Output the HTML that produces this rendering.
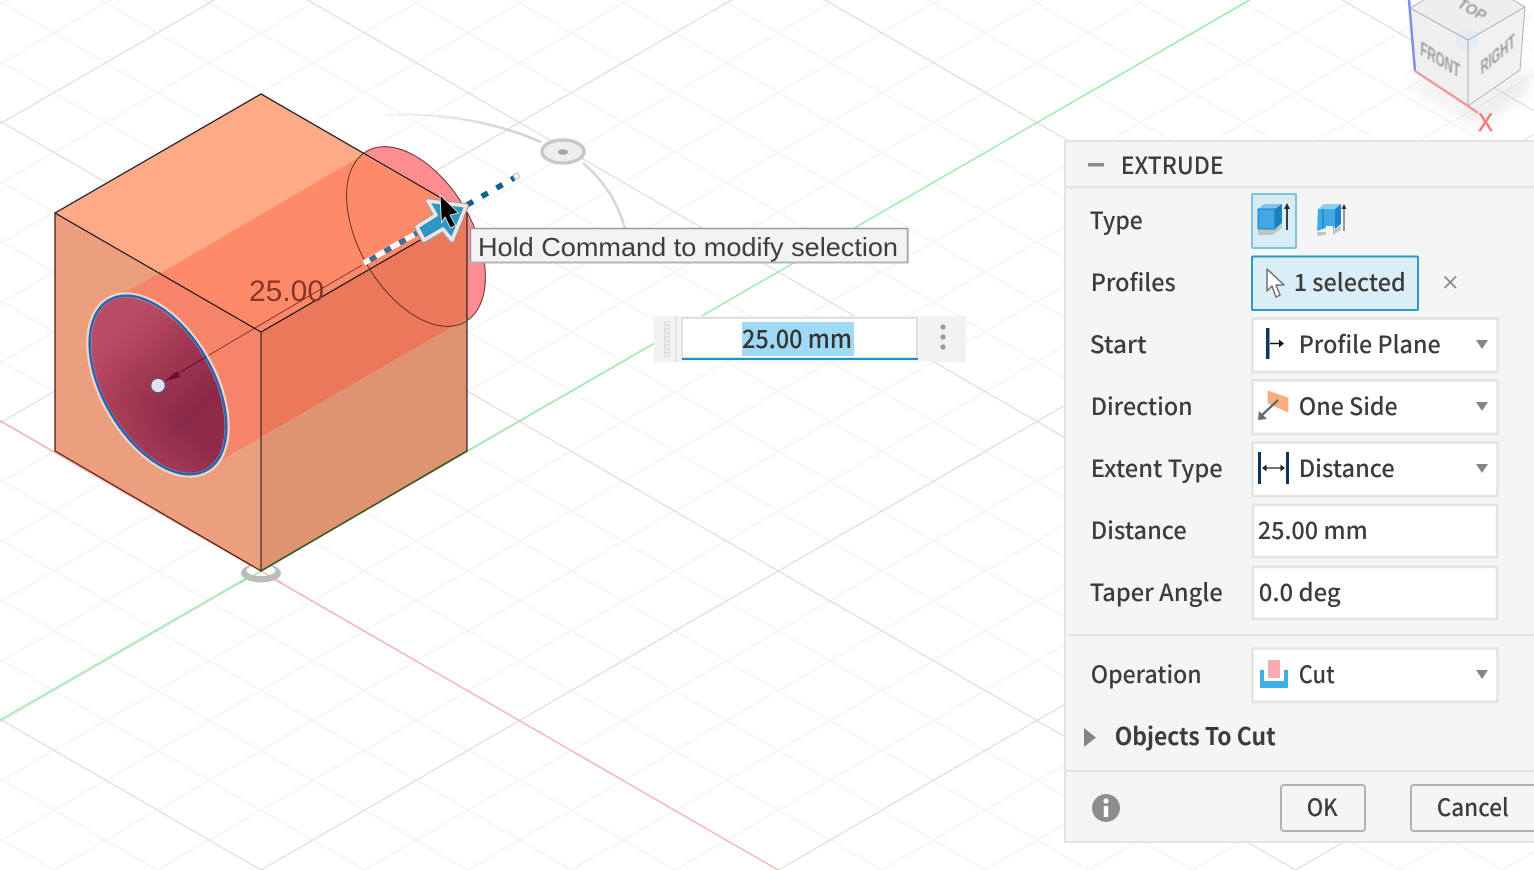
<!DOCTYPE html>
<html>
<head>
<meta charset="utf-8">
<style>
html,body{margin:0;padding:0;background:#fff;width:1534px;height:870px;overflow:hidden}
svg{display:block}
.p{font-family:"Noto Sans CJK JP","Liberation Sans",sans-serif;font-size:24px;font-weight:500;fill:#3c3c3c;transform:translateX(-0.3px)}
.c{font-family:"Liberation Sans",sans-serif;fill:#9d9d9d;font-weight:700}
.field{fill:#fff;stroke:#e4e4e4;stroke-width:2.5}
.tri{fill:#858585}
</style>
</head>
<body>
<svg width="1534" height="870" viewBox="0 0 1534 870" xmlns="http://www.w3.org/2000/svg">
<defs>
<pattern id="minor" patternUnits="userSpaceOnUse" x="261" y="571" width="103.46" height="59.8">
<path d="M0 0L103.46 59.8M0 59.8L103.46 0" stroke="#f0f0f0" stroke-width="1" fill="none"/>
</pattern>
<pattern id="major" patternUnits="userSpaceOnUse" x="261" y="571" width="517.3" height="299">
<path d="M0 0L517.3 299M0 299L517.3 0" stroke="#dadada" stroke-width="1" fill="none"/>
</pattern>
<linearGradient id="hole" gradientUnits="userSpaceOnUse" x1="92" y1="405" x2="222" y2="375">
<stop offset="0" stop-color="#bb4c67"/>
<stop offset="0.45" stop-color="#a03651"/>
<stop offset="0.85" stop-color="#8b2a48"/>
<stop offset="1" stop-color="#8d2b49"/>
</linearGradient>
<linearGradient id="hole2" gradientUnits="userSpaceOnUse" x1="170" y1="400" x2="200" y2="470">
<stop offset="0" stop-color="#bc4d66" stop-opacity="0"/>
<stop offset="1" stop-color="#bc4d66" stop-opacity=".8"/>
</linearGradient>
<linearGradient id="arcfade" gradientUnits="userSpaceOnUse" x1="385" y1="115" x2="520" y2="130">
<stop offset="0" stop-color="#e2e2e2" stop-opacity=".4"/>
<stop offset="1" stop-color="#d0d0d0"/>
</linearGradient>
<clipPath id="cube"><path d="M261 94L467 213V451L261 571L55 451V213Z"/></clipPath>
<filter id="soft" x="-30%" y="-30%" width="160%" height="160%"><feGaussianBlur stdDeviation="8"/></filter>
<filter id="b05"><feGaussianBlur stdDeviation="0.45"/></filter>
</defs>

<rect width="1534" height="870" fill="#fff"/>
<rect width="1534" height="870" fill="url(#minor)"/>
<rect width="1534" height="870" fill="url(#major)"/>
<path d="M0 421L778 870" stroke="#f7a8a8" stroke-width="1.1"/>
<path d="M0 720L1250 0" stroke="#84ee98" stroke-width="1.1"/>

<!-- origin ring -->
<ellipse cx="261" cy="573" rx="20" ry="9.500" fill="#bcbcbc"/>
<ellipse cx="261" cy="570.500" rx="14.500" ry="5.500" fill="#fff"/>
<path d="M0 720L261 571M261 571L778 870" stroke="none"/>
<path d="M240 583L261 571" stroke="#84ee98" stroke-width="1.100"/>
<path d="M261 571L282 583" stroke="#f7a8a8" stroke-width="1.100"/>

<!-- rotation arc -->
<path d="M385 115C440 112 495 122 541 142" fill="none" stroke="url(#arcfade)" stroke-width="2.500"/>
<path d="M583 163C603 180 618 202 625 229" fill="none" stroke="#d6d6d6" stroke-width="2.500"/>
<ellipse cx="563" cy="151.500" rx="21" ry="11.500" fill="#eeeeee" stroke="#c8c8c8" stroke-width="3.500"/>
<ellipse cx="563" cy="152" rx="5" ry="2.800" fill="#a6a6a6"/>

<!-- far disk -->
<ellipse cx="416" cy="236.500" rx="98.500" ry="56.500" transform="rotate(60 416 236.500)" fill="#fe8d92"/>

<!-- cube faces -->
<path d="M261 94L467 213L261 332L55 213Z" fill="#ffaa86"/>
<path d="M55 213L261 332V571L55 451Z" fill="#eb9f7f"/>
<path d="M261 332L467 213V451L261 571Z" fill="#de9371"/>

<!-- cylinder bands -->
<g clip-path="url(#cube)">
<path d="M363 155L467 213L261 332L160 273.500Z" fill="#ff8a6a"/>
<path d="M160 273L261 332V437L223 459L110 420V300Z" fill="#f58468"/>
<path d="M261 332L467 213V318L261 437Z" fill="#ec785c"/>
</g>

<!-- edges -->
<g fill="none" stroke-width="1.200" stroke-linecap="round">
<path d="M55 213L261 94L467 213L261 332Z" stroke="#151515"/>
<path d="M55 213V451" stroke="#2a1510"/>
<path d="M467 213V451" stroke="#222"/>
<path d="M261 332V571" stroke="#3a2a25"/>
<path d="M55 451L261 571" stroke="#5b1a12"/>
<path d="M261 571L467 451" stroke="#33591f" stroke-width="1.600"/>
</g>
<ellipse cx="416" cy="236.500" rx="98.500" ry="56.500" transform="rotate(60 416 236.500)" fill="none" stroke="#5a2a22" stroke-width=".9"/>

<!-- thin dimension line -->
<path d="M170 378L362 265" stroke="#5a1a20" stroke-width="0.9" opacity=".8"/>
<text x="249" y="301" font-family="'Liberation Sans',sans-serif" font-size="30" fill="#87352a" textLength="75" lengthAdjust="spacing">25.00</text>

<!-- hole -->
<ellipse cx="158" cy="385" rx="99" ry="56" transform="rotate(60 158 385)" fill="url(#hole)" stroke="#f3d6c8" stroke-width="5"/>
<ellipse cx="158" cy="385" rx="97.500" ry="54.500" transform="rotate(60 158 385)" fill="url(#hole2)"/>
<ellipse cx="158" cy="385" rx="98" ry="55" transform="rotate(60 158 385)" fill="none" stroke="#2a66b0" stroke-width="2.600"/>
<path d="M165 381L206 357" stroke="#5a0f28" stroke-width="1"/>
<path d="M165 381L177 371L180 377Z" fill="#6a0f30"/>
<circle cx="158" cy="385.500" r="7.500" fill="#e2e0f0" stroke="#6c4c6c" stroke-width="1.800"/>

<!-- manipulator -->
<path d="M364 263L417 233M467 205L514 178" stroke="#fff" stroke-width="5.500" opacity=".95"/>
<path d="M370 260L417 233" stroke="#3c6f93" stroke-width="5.500" stroke-dasharray="7 10"/>
<path d="M467 205L514 178" stroke="#0f5e8c" stroke-width="5.500" stroke-dasharray="7 10"/>
<rect x="514" y="173.500" width="5" height="5" fill="#fff" stroke="#bbb" stroke-width="1" transform="rotate(-30 516.500 176)"/>
<path d="M466 206L428 201L436 215L417 227L424 240L443 229L452 240Z" fill="#2a97c6" stroke="#a59c9f" stroke-width="6" stroke-linejoin="round"/>
<path d="M466 206L428 201L436 215L417 227L424 240L443 229L452 240Z" fill="#2a97c6" stroke="#f5e3df" stroke-width="3.500" stroke-linejoin="round"/>
<path d="M440 195L458.500 213L450 215L455.500 225.500L450.500 228L445 217L441.500 223Z" fill="#000" stroke="#fff" stroke-width="0.8" stroke-linejoin="round"/>

<!-- tooltip -->
<rect x="470.500" y="228.500" width="437" height="34" fill="#f3f3f3" stroke="#9a9a9a" stroke-width="1.500"/>
<path d="M470 262.500H908V228" fill="none" stroke="#b0b0b0" stroke-width="1.500"/>
<text x="478" y="256" font-family="'Liberation Sans',sans-serif" font-size="26" fill="#3d3d3d" textLength="420" lengthAdjust="spacingAndGlyphs">Hold Command to modify selection</text>

<!-- floating input -->
<rect x="654" y="316" width="312" height="46" fill="#f2f2f2"/>
<rect x="664" y="321" width="6" height="36" fill="#dedede"/>
<path d="M665 323H669M665 327H669M665 331H669M665 335H669M665 339H669M665 343H669M665 347H669M665 351H669M665 355H669" stroke="#f6f6f6" stroke-width="1.500"/>
<rect x="675" y="316" width="2" height="46" fill="#e4e4e4"/>
<rect x="682" y="318" width="235" height="40" fill="#fff" stroke="#e0e0e0" stroke-width="2"/>
<rect x="682" y="358" width="236" height="2" fill="#1495d2"/>
<rect x="742" y="322" width="112" height="34" fill="#9fd9f3"/>
<text x="742" y="348" font-family="'Noto Sans CJK JP','Liberation Sans',sans-serif" font-size="25" font-weight="500" fill="#333" textLength="110" lengthAdjust="spacingAndGlyphs">25.00 mm</text>
<circle cx="943" cy="327" r="2.600" fill="#9a9a9a"/><circle cx="943" cy="337" r="2.600" fill="#9a9a9a"/><circle cx="943" cy="347" r="2.600" fill="#9a9a9a"/>

<!-- view cube -->
<path d="M1415 74L1468 108L1520 72L1528 68V90L1478 124L1418 90Z" fill="#c8c8c8" opacity=".4" filter="url(#soft)"/>
<path d="M1410 8L1424 0H1513L1525 7L1468 40Z" fill="#eeeeee"/>
<path d="M1410 8L1468 40V106L1415 71Z" fill="#efefef"/>
<path d="M1468 40L1525 7L1520 70L1468 106Z" fill="#f1f1f1"/>
<path d="M1467 27L1478 33V46L1467 52L1456 46V33Z" fill="#e6ebf1"/>
<path d="M1410 8L1424 0M1410 8L1468 40L1525 7L1513 0M1468 40V106M1525 7L1520 70L1468 106" fill="none" stroke="#b2b2b2" stroke-width="1"/>
<path d="M1409 0L1415 71" stroke="#858bea" stroke-width="2.500"/>
<path d="M1415 71L1468 106L1478 113" stroke="#f09a9a" stroke-width="2.500" fill="none"/>
<g filter="url(#b05)">
<text class="c" font-size="19" transform="matrix(.86 .52 -.06 1 1420 54)" textLength="46" lengthAdjust="spacingAndGlyphs">FRONT</text>
<text class="c" font-size="19" transform="matrix(.78 -.66 .06 1 1481 75)" textLength="44" lengthAdjust="spacingAndGlyphs">RIGHT</text>
<text class="c" font-size="15" transform="matrix(.87 .5 -.6 .8 1456 6)" textLength="30" lengthAdjust="spacingAndGlyphs">TOP</text>
</g>
<text x="1478" y="131" font-family="'Liberation Sans',sans-serif" font-size="25" fill="#f47c7c" stroke="#f47c7c" stroke-width=".6" textLength="15" lengthAdjust="spacingAndGlyphs">X</text>

<!-- panel -->
<rect x="1065" y="141" width="480" height="701" fill="#f5f5f5" stroke="#e3e3e3" stroke-width="2"/>
<rect x="1065" y="186" width="469" height="2.500" fill="#e4e4e4"/>
<rect x="1088" y="163" width="16" height="3.500" fill="#8a8a8a"/>
<text class="p" x="1121" y="174" textLength="103" lengthAdjust="spacingAndGlyphs">EXTRUDE</text>

<text class="p" x="1090" y="229" textLength="53" lengthAdjust="spacingAndGlyphs">Type</text>
<text class="p" x="1091" y="291" textLength="85" lengthAdjust="spacingAndGlyphs">Profiles</text>
<text class="p" x="1090" y="353" textLength="57" lengthAdjust="spacingAndGlyphs">Start</text>
<text class="p" x="1091" y="415" textLength="102" lengthAdjust="spacingAndGlyphs">Direction</text>
<text class="p" x="1091" y="477" textLength="132" lengthAdjust="spacingAndGlyphs">Extent Type</text>
<text class="p" x="1091" y="539" textLength="96" lengthAdjust="spacingAndGlyphs">Distance</text>
<text class="p" x="1090" y="601" textLength="133" lengthAdjust="spacingAndGlyphs">Taper Angle</text>
<text class="p" x="1091" y="683" textLength="111" lengthAdjust="spacingAndGlyphs">Operation</text>

<!-- type buttons -->
<rect x="1252" y="194" width="44" height="54" rx="1" fill="#d8ecf5" stroke="#7cc4de" stroke-width="2"/>
<path d="M1258 230L1275 229L1282 224V228L1272 235H1258Z" fill="#c2c2c2"/>
<path d="M1258 209L1264 204H1282L1275 209Z" fill="#7fc4ee"/>
<path d="M1275 209L1282 204V223L1275 229Z" fill="#1b7fc0"/>
<rect x="1258" y="209" width="17" height="20" fill="#3fa9e8" stroke="#1b7fc0" stroke-width="1"/>
<path d="M1287 230V208" stroke="#2a2a2a" stroke-width="1.800"/><path d="M1284 209L1287 203L1290 209Z" fill="#2a2a2a"/>
<path d="M1317 232H1326V235L1317 236ZM1333 230L1341 226V230L1333 235Z" fill="#c4c4c4"/>
<path d="M1318 209L1324 204H1341L1335 209Z" fill="#8fcdf0"/>
<path d="M1318 209H1335V226L1333 230V226H1326V228L1317 231Z" fill="#3fa9e8"/>
<path d="M1335 209L1341 204V224L1335 229Z" fill="#1b85c6"/>
<path d="M1323 209V228" stroke="#1b85c6" stroke-width="1.500"/>
<path d="M1344 231V208" stroke="#333" stroke-width="1"/><path d="M1341.500 209L1344 204L1346.500 209Z" fill="#333"/>

<!-- profiles -->
<rect x="1252" y="256.500" width="166" height="53.500" rx="1" fill="#d9eef7" stroke="#2a9ac4" stroke-width="2"/>
<path d="M1267 269V291L1272 286L1276 297L1280 295L1276 285H1284Z" fill="#fff" stroke="#707070" stroke-width="1.500" stroke-linejoin="round"/>
<text class="p" x="1294" y="291" textLength="112" lengthAdjust="spacingAndGlyphs">1 selected</text>
<path d="M1444.500 276.500L1456 288M1456 276.500L1444.500 288" stroke="#8a8a8a" stroke-width="1.800"/>

<!-- Start -->
<rect class="field" x="1252.500" y="318.500" width="245" height="53.500"/>
<rect x="1266" y="328" width="3.500" height="31" fill="#0c3560"/>
<path d="M1270 343.500H1280" stroke="#111" stroke-width="1.400"/><path d="M1279 339.500L1284 343.500L1279 347.500Z" fill="#111"/>
<text class="p" x="1299" y="353" textLength="142" lengthAdjust="spacingAndGlyphs">Profile Plane</text>
<path class="tri" d="M1476 340H1488L1482 349Z"/>

<!-- Direction -->
<rect class="field" x="1252.500" y="380.500" width="245" height="53.500"/>
<path d="M1268 391L1288 398L1288 412L1268 403Z" fill="#f9ae7c" stroke="#eda271" stroke-width=".6"/>
<path d="M1278 400L1260 417" stroke="#6a6a6a" stroke-width="2.400"/><path d="M1258 420L1259 411L1267 419Z" fill="#6a6a6a"/>
<text class="p" x="1299" y="415" textLength="99" lengthAdjust="spacingAndGlyphs">One Side</text>
<path class="tri" d="M1476 402H1488L1482 411Z"/>

<!-- Extent -->
<rect class="field" x="1252.500" y="442.500" width="245" height="53.500"/>
<rect x="1258" y="452" width="3" height="32" fill="#0c3560"/><rect x="1286" y="452" width="3" height="32" fill="#0c3560"/>
<path d="M1264 468H1284" stroke="#222" stroke-width="1.200"/><path d="M1262 468L1266.500 464.500V471.500ZM1285 468L1280.500 464.500V471.500Z" fill="#222"/>
<text class="p" x="1299" y="477" textLength="96" lengthAdjust="spacingAndGlyphs">Distance</text>
<path class="tri" d="M1476 464H1488L1482 473Z"/>

<!-- Inputs -->
<rect class="field" x="1253" y="505" width="244" height="52"/>
<text class="p" x="1258" y="539" textLength="110" lengthAdjust="spacingAndGlyphs">25.00 mm</text>
<rect class="field" x="1253" y="567" width="244" height="52"/>
<text class="p" x="1259" y="601" textLength="82" lengthAdjust="spacingAndGlyphs">0.0 deg</text>

<rect x="1068" y="634" width="466" height="2" fill="#e2e2e2"/>

<!-- Operation -->
<rect class="field" x="1252.500" y="648.500" width="245" height="53.500"/>
<path d="M1260 670H1264V681H1284V670H1288V688H1260Z" fill="#3fb0e6"/>
<rect x="1268" y="660" width="12" height="18" fill="#f6abb0"/>
<text class="p" x="1299" y="683" textLength="36" lengthAdjust="spacingAndGlyphs">Cut</text>
<path class="tri" d="M1476 670H1488L1482 679Z"/>

<path d="M1084 728L1096 737.500L1084 747Z" fill="#858585"/>
<text class="p" x="1115" y="745" style="font-weight:700" textLength="161" lengthAdjust="spacingAndGlyphs">Objects To Cut</text>

<rect x="1065" y="770" width="469" height="2" fill="#e2e2e2"/>
<circle cx="1106" cy="808" r="14" fill="#8e8e8e"/>
<rect x="1103.800" y="806" width="4.400" height="11" fill="#fff"/>
<circle cx="1106" cy="801" r="2.600" fill="#fff"/>

<rect x="1281" y="785" width="84" height="46" rx="3" fill="#f5f5f5" stroke="#b2b2b2" stroke-width="2"/>
<text class="p" x="1307" y="816" textLength="31" lengthAdjust="spacingAndGlyphs">OK</text>
<rect x="1411" y="785" width="140" height="46" rx="3" fill="#f5f5f5" stroke="#b2b2b2" stroke-width="2"/>
<text class="p" x="1437" y="816" textLength="72" lengthAdjust="spacingAndGlyphs">Cancel</text>
</svg>
</body>
</html>
